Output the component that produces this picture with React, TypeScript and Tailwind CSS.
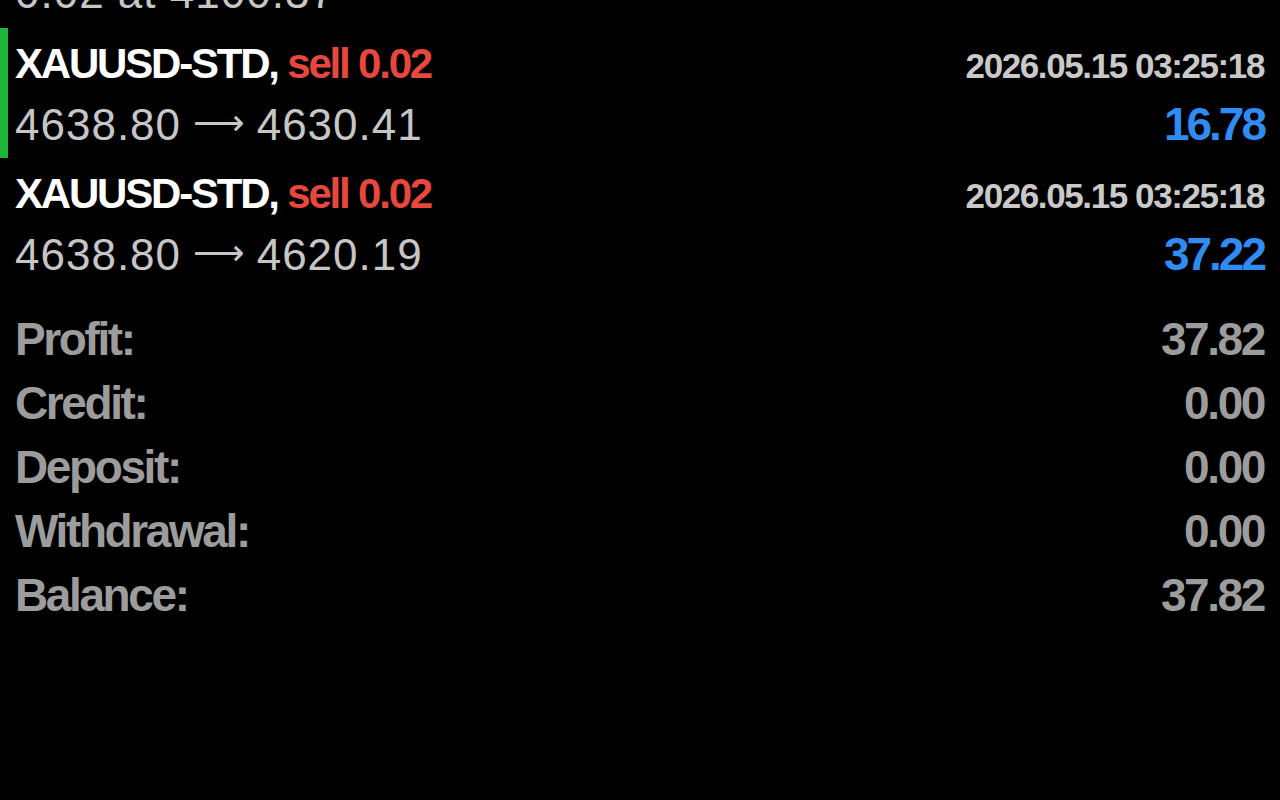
const bold = "font-['Liberation_Sans','Arial',sans-serif] font-bold"
const reg = "font-['Liberation_Sans','Arial',sans-serif]"

const trades = [
  { symbol: 'XAUUSD-STD', side: 'sell 0.02', open: '4638.80', close: '4630.41', time: '2026.05.15 03:25:18', profit: '16.78', active: true },
  { symbol: 'XAUUSD-STD', side: 'sell 0.02', open: '4638.80', close: '4620.19', time: '2026.05.15 03:25:18', profit: '37.22', active: false },
]

const summary = [
  { label: 'Profit:', value: '37.82' },
  { label: 'Credit:', value: '0.00' },
  { label: 'Deposit:', value: '0.00' },
  { label: 'Withdrawal:', value: '0.00' },
  { label: 'Balance:', value: '37.82' },
]

function Prices({ open, close }: { open: string; close: string }) {
  return (
    <div className={`${reg} text-[44px] tracking-[1px] text-[#c6c6c6]`}>
      {open}
      <span className="relative -top-[5px] font-['DejaVu_Sans',sans-serif] tracking-normal text-[36px] mx-[12px]">⟶</span>
      {close}
    </div>
  )
}

function TradeRow({ t }: { t: (typeof trades)[number] }) {
  return (
    <div className="relative pt-[6px] pb-[4px] pl-[15px] pr-[16px]">
      {t.active && <div className="absolute left-0 top-0 bottom-0 w-[8px] bg-[#1fb53b]" />}
      <div className="flex items-baseline justify-between h-[60px] leading-[60px]">
        <div className={`${bold} text-[42px] tracking-[-2.2px] text-white`}>
          {t.symbol}, <span className="text-[#e8473d]">{t.side}</span>
        </div>
        <div className={`${bold} text-[35px] tracking-[-1.4px] text-[#c9c9c9]`}>{t.time}</div>
      </div>
      <div className="flex items-baseline justify-between h-[60px] leading-[60px]">
        <Prices open={t.open} close={t.close} />
        <div className={`${bold} text-[46px] tracking-[-3px] text-[#2f8cf3]`}>{t.profit}</div>
      </div>
    </div>
  )
}

export default function App() {
  return (
    <div className="w-[1280px] h-[800px] bg-black overflow-hidden">
      {/* previous deal, scrolled mostly out of view */}
      <div className="flex flex-col h-[28px] px-[15px]">
        <div className={`${reg} -mt-[29px] leading-none text-[44px] tracking-[1px] text-[#c6c6c6]`}>
          0.02 at 4100.37
        </div>
      </div>
      {trades.map((t, i) => (
        <TradeRow key={i} t={t} />
      ))}
      <div className="mt-[19px] pl-[15px] pr-[16px]">
        {summary.map((s) => (
          <div
            key={s.label}
            className={`${bold} flex items-baseline justify-between h-[64px] leading-[64px] text-[46px] tracking-[-2.4px] text-[#9c9c9c]`}
          >
            <span>{s.label}</span>
            <span>{s.value}</span>
          </div>
        ))}
      </div>
    </div>
  )
}
